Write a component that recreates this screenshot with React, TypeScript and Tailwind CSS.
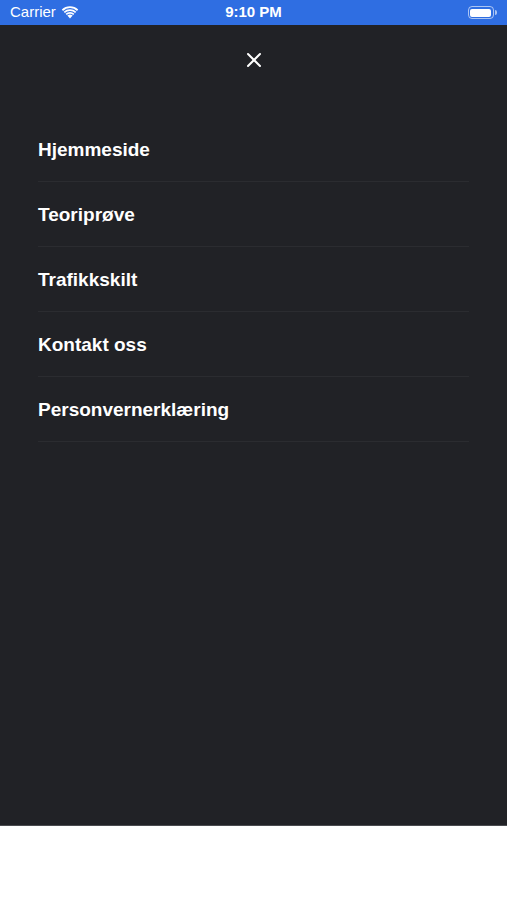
import { X } from 'lucide-react'

const items = ['Hjemmeside', 'Teoriprøve', 'Trafikkskilt', 'Kontakt oss', 'Personvernerklæring']

function StatusBar() {
  return (
    <div className="h-[25px] bg-[#2f6ee2] flex items-center justify-between px-[10px] text-white text-[15px]">
      <div className="flex items-center gap-[5px] w-[120px]">
        <span>Carrier</span>
        <svg width="18" height="13" viewBox="0 0 18 13" fill="white">
          <path d="M9 12.5 L6.4 9.6 A3.8 3.8 0 0 1 11.6 9.6 Z" />
          <path d="M4.6 7.8 A6.4 6.4 0 0 1 13.4 7.8 L12.2 9.1 A4.6 4.6 0 0 0 5.8 9.1 Z" />
          <path d="M2.7 5.7 A9.2 9.2 0 0 1 15.3 5.7 L14.1 7 A7.4 7.4 0 0 0 3.9 7 Z" />
          <path d="M0.8 3.6 A12 12 0 0 1 17.2 3.6 L16 4.9 A10.2 10.2 0 0 0 2 4.9 Z" />
        </svg>
      </div>
      <span className="font-semibold">9:10 PM</span>
      <div className="w-[120px] flex justify-end">
        <div className="flex items-center">
          <div className="w-[26px] h-[13px] rounded-[4px] border border-white/60 p-[1.5px]">
            <div className="w-full h-full rounded-[2px] bg-white" />
          </div>
          <div className="w-[2px] h-[5px] rounded-r-sm bg-white/60 ml-[1px]" />
        </div>
      </div>
    </div>
  )
}

export default function App() {
  return (
    <div className="w-[507px] h-[900px] bg-white font-['Liberation_Sans',Arial,sans-serif]">
      <StatusBar />
      <div className="h-[801px] bg-[#212226] border-b border-[#4a4b4f] flex flex-col">
        <div className="h-[92px] flex justify-center pt-[23px]">
          <X className="w-[24px] h-[24px] text-white" strokeWidth={2} />
        </div>
        <div className="px-[38px] flex flex-col">
          {items.map((item) => (
            <div
              key={item}
              className="h-[65px] flex items-center pt-[2px] border-b border-[#2b2c30] text-white text-[19px] font-semibold"
            >
              {item}
            </div>
          ))}
        </div>
      </div>
    </div>
  )
}
